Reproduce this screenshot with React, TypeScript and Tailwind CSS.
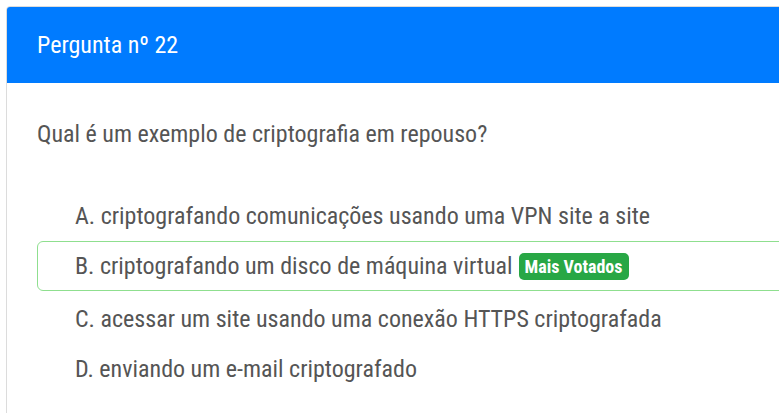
export default function App() {
  const options = [
    { key: 'A', text: 'criptografando comunicações usando uma VPN site a site' },
    { key: 'B', text: 'criptografando um disco de máquina virtual', voted: true },
    { key: 'C', text: 'acessar um site usando uma conexão HTTPS criptografada' },
    { key: 'D', text: 'enviando um e-mail criptografado' },
  ];

  return (
    <div className="h-screen bg-white pl-[6px] pt-[6px] overflow-hidden font-['Roboto_Condensed','Roboto',sans-serif] [font-stretch:condensed]">
      <div className="w-[830px] border border-[#dcdcdc] rounded-tl-[4px] overflow-hidden">
        <div className="h-[76px] bg-[#007bff] flex items-center px-[30px]">
          <h3 className="text-[24px] text-white leading-none">Pergunta nº 22</h3>
        </div>
        <div className="px-[30px] pt-[37px] pb-10">
          <p className="text-[24px] text-[#555] leading-[28px]">Qual é um exemplo de criptografia em repouso?</p>
          <ul className="mt-[43px] flex flex-col">
            {options.map((o) => (
              <li
                key={o.key}
                className={
                  o.voted
                    ? 'h-[50px] flex items-center pl-[37px] border border-[#8fdf8f] rounded-[6px] text-[24px] text-[#555]'
                    : 'h-[50px] flex items-center pl-[38px] text-[24px] text-[#555] [&:nth-child(n+3)]:pt-[5px]'
                }
              >
                <span>
                  {o.key}. {o.text}
                </span>
                {o.voted && (
                  <span className="ml-[6px] bg-[#28a745] text-white text-[18px] font-bold rounded-[5px] px-[6px] h-[27px] flex items-center">
                    Mais Votados
                  </span>
                )}
              </li>
            ))}
          </ul>
        </div>
      </div>
    </div>
  );
}
